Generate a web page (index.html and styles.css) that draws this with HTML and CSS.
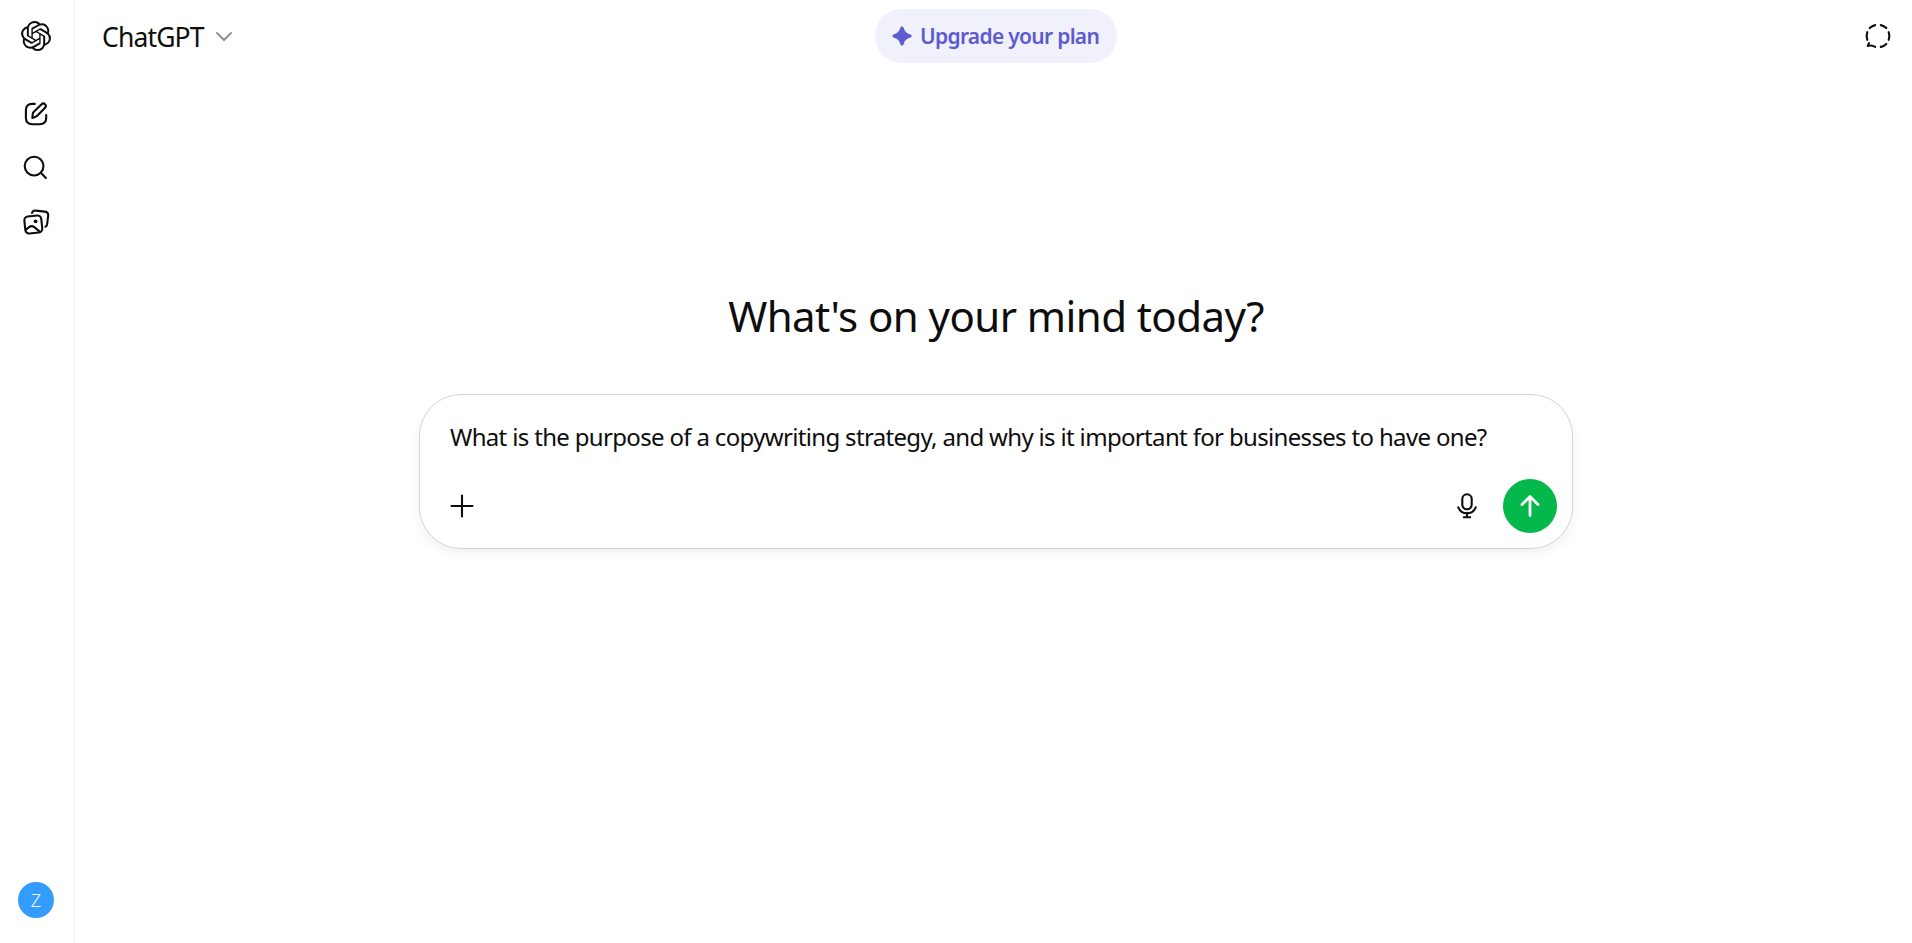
FILE: index.html
```html
<!DOCTYPE html>
<html lang="en">
<head>
    <meta charset="UTF-8">
    <title>ChatGPT</title>
    <link rel="stylesheet" href="styles.css">
</head>
<body>

<aside class="rail">
    <a class="logo" href="#">
        <svg width="30" height="30" viewBox="0 0 24 24" fill="currentColor"><path d="M22.2819 9.8211a5.9847 5.9847 0 0 0-.5157-4.9108 6.0462 6.0462 0 0 0-6.5098-2.9A6.0651 6.0651 0 0 0 4.9807 4.1818a5.9847 5.9847 0 0 0-3.9977 2.9 6.0462 6.0462 0 0 0 .7427 7.0966 5.98 5.98 0 0 0 .511 4.9107 6.051 6.051 0 0 0 6.5146 2.9001A5.9847 5.9847 0 0 0 13.2599 24a6.0557 6.0557 0 0 0 5.7718-4.2058 5.9894 5.9894 0 0 0 3.9977-2.9001 6.0557 6.0557 0 0 0-.7475-7.0729zm-9.022 12.6081a4.4755 4.4755 0 0 1-2.8764-1.0408l.1419-.0804 4.7783-2.7582a.7948.7948 0 0 0 .3927-.6813v-6.7369l2.02 1.1686a.071.071 0 0 1 .038.052v5.5826a4.504 4.504 0 0 1-4.4945 4.4944zm-9.6607-4.1254a4.4708 4.4708 0 0 1-.5346-3.0137l.142.0852 4.783 2.7582a.7712.7712 0 0 0 .7806 0l5.8428-3.3685v2.3324a.0804.0804 0 0 1-.0332.0615L9.74 19.9502a4.4992 4.4992 0 0 1-6.1408-1.6464zM2.3408 7.8956a4.485 4.485 0 0 1 2.3655-1.9728V11.6a.7664.7664 0 0 0 .3879.6765l5.8144 3.3543-2.0201 1.1685a.0757.0757 0 0 1-.071 0l-4.8303-2.7865A4.504 4.504 0 0 1 2.3408 7.872zm16.5963 3.8558L13.1038 8.364 15.1192 7.2a.0757.0757 0 0 1 .071 0l4.8303 2.7913a4.4944 4.4944 0 0 1-.6765 8.1042v-5.6772a.79.79 0 0 0-.407-.667zm2.0107-3.0231l-.142-.0852-4.7735-2.7818a.7759.7759 0 0 0-.7854 0L9.409 9.2297V6.8974a.0662.0662 0 0 1 .0284-.0615l4.8303-2.7866a4.4992 4.4992 0 0 1 6.6802 4.66zM8.3065 12.863l-2.02-1.1638a.0804.0804 0 0 1-.038-.0567V6.0742a4.4992 4.4992 0 0 1 7.3757-3.4537l-.142.0805L8.704 5.459a.7948.7948 0 0 0-.3927.6813zm1.0976-2.3654l2.602-1.4998 2.6069 1.4998v2.9994l-2.5974 1.4997-2.6067-1.4997Z"/></svg>
    </a>
    <nav class="rail-nav">
        <a class="rail-item" href="#">
            <svg class="icon" viewBox="0 0 30 30"><path d="M13.8 4.9H11.2Q4.9 4.9 4.9 11.2V19Q4.9 25.2 11.2 25.2H18.8Q25.2 25.2 25.2 19V16"/><path d="M11.3 18.9l.5-4.2q.1-.9.8-1.6l8-7.8a2.4 2.4 0 0 1 3.5 3.4l-7.9 8.1q-.7.7-1.600.9z"/></svg>
        </a>
        <a class="rail-item" href="#">
            <svg class="icon" viewBox="0 0 30 30"><circle cx="13.1" cy="13.1" r="9.4"/><path d="M19.8 19.8l5.1 5.200"/></svg>
        </a>
        <a class="rail-item" href="#">
            <svg class="icon" viewBox="0 0 30 30"><rect x="3.8" y="9" width="17" height="17" rx="3.8" transform="rotate(-6 12.3 17.5)"/><path d="M4.8 22.6l3.300-2.500q2.600-2 5.200 0l5.400 4.500"/><circle class="dot" cx="14.6" cy="14.3" r="1.900"/><path d="M11 6q.9-2.700 3.800-2.400l9 1q3.800.5 3.400 4.100l-1.100 8.700q-.2 1.700-1.700 2.300"/></svg>
        </a>
    </nav>
    <div class="avatar">Z</div>
</aside>

<main class="main">
    <header class="header">
        <button class="model">
            <span class="model-name">ChatGPT</span>
            <svg class="chevron" width="18" height="12" viewBox="0 0 18 12"><path d="M2 2l7 7 7-7"/></svg>
        </button>
        <button class="upgrade">
            <svg width="20" height="20" viewBox="0 0 20 20" fill="currentColor"><path d="M10 .4c.8 0 1.2.5 1.5 1.2 1.3 4 2.9 5.6 6.9 6.9.7.3 1.2.7 1.2 1.5s-.5 1.2-1.2 1.5c-4 1.3-5.6 2.9-6.9 6.9-.3.7-.7 1.2-1.5 1.2s-1.2-.5-1.5-1.2c-1.3-4-2.9-5.6-6.9-6.9C.9 11.2.4 10.8.4 10s.5-1.2 1.2-1.5c4-1.3 5.6-2.9 6.9-6.9C8.8.9 9.2.4 10 .4z"/></svg>
            <span class="upgrade-text">Upgrade your plan</span>
        </button>
        <button class="temp-chat">
            <svg class="icon" viewBox="0 0 30 30"><path d="M6.7 7.1A11.3 11.3 0 0 1 12.2 4.1M17.8 4.1A11.3 11.3 0 0 1 23.3 7.1M25.7 11.2A11.3 11.3 0 0 1 25.7 18.8M23.3 22.9A11.3 11.3 0 0 1 17.8 25.9M4.3 18.8A11.3 11.3 0 0 1 4.3 11.2M5.9 22L4.8 25Q8.6 23.7 12.2 25.9"/></svg>
        </button>
    </header>

    <section class="center">
        <h1 class="greeting"><span class="greeting-text">What's on your mind today?</span></h1>
        <div class="composer">
            <div class="prompt"><span class="prompt-text">What is the purpose of a copywriting strategy, and why is it important for businesses to have one?</span></div>
            <div class="tools">
                <button class="tool">
                    <svg class="icon" viewBox="0 0 30 30"><path d="M15 4.5v21M4.5 15h21"/></svg>
                </button>
                <button class="tool mic">
                    <svg class="icon" viewBox="0 0 30 30"><rect x="10.3" y="3.3" width="9.4" height="15" rx="4.7"/><path d="M6.3 16.3a9.3 9.3 0 0 0 17.4 0M15 21.8v4.4M11.8 26.3h6.4"/></svg>
                </button>
                <button class="send">
                    <svg width="30" height="30" viewBox="0 0 30 30"><path d="M15 24.5V6M7 13.5l8-8 8 8"/></svg>
                </button>
            </div>
        </div>
    </section>
</main>

</body>
</html>
```
FILE: styles.css
```css
* {
    box-sizing: border-box;
}
body {
    margin: 0;
    height: 100vh;
    display: flex;
    font-family: "Noto Sans", sans-serif;
    color: #0d0d0d;
    background: #fff;
    overflow: hidden;
}
button {
    padding: 0;
    border: none;
    background: none;
    color: inherit;
    font: inherit;
    cursor: pointer;
}
a {
    color: inherit;
}
svg {
    display: block;
}
.icon {
    width: 30px;
    height: 30px;
    fill: none;
    stroke: currentColor;
    stroke-width: 2.1;
    stroke-linecap: round;
    stroke-linejoin: round;
}
.icon .dot {
    fill: currentColor;
    stroke: none;
}

/* left rail */
.rail {
    width: 75px;
    padding-bottom: 25px;
    border-right: 1px solid #f0f0f0;
    display: flex;
    flex-direction: column;
}
.logo {
    width: 72px;
    height: 72px;
    display: grid;
    place-items: center;
}
.rail-nav {
    width: 72px;
    padding-top: 15px;
}
.rail-item {
    height: 54px;
    display: grid;
    place-items: center;
}
.avatar {
    width: 36px;
    height: 36px;
    margin: auto 0 0 18px;
    border-radius: 50%;
    background: #339cff;
    color: #fff;
    font-size: 18px;
    font-weight: 300;
    line-height: 36px;
    text-align: center;
}

/* top bar */
.main {
    flex: 1;
    display: flex;
    flex-direction: column;
}
.header {
    height: 72px;
    padding: 0 19px 0 24px;
    display: grid;
    grid-template-columns: 1fr auto 1fr;
    align-items: center;
}
.model {
    padding: 2px 0 0 3px;
    display: flex;
    align-items: center;
    gap: 11px;
    font-size: 26.5px;
    line-height: 42px;
}
.model-name {
    letter-spacing: -0.85px;
}
.chevron {
    fill: none;
    stroke: #8f8f8f;
    stroke-width: 2;
    stroke-linecap: round;
    stroke-linejoin: round;
}
.upgrade {
    width: 242px;
    height: 54px;
    padding-left: 17px;
    border-radius: 27px;
    background: #f1f1fb;
    color: #5d5bd0;
    display: flex;
    align-items: center;
    gap: 8px;
    font-size: 21px;
    font-weight: 600;
    white-space: nowrap;
}
.upgrade-text {
    letter-spacing: -0.7px;
}
.temp-chat {
    justify-self: end;
}

/* prompt area */
.center {
    padding: 211px 0 0 5px;
    display: flex;
    flex-direction: column;
    align-items: center;
}
.greeting {
    margin: 0 0 46px;
    font-size: 42px;
    font-weight: 400;
    line-height: 65px;
    white-space: nowrap;
}
.greeting-text {
    letter-spacing: -0.57px;
}
.composer {
    width: 1154px;
    height: 155px;
    padding: 15px 15px 15px 27px;
    border: 1px solid #d4d4d4;
    border-radius: 42px;
    background: #fff;
    box-shadow: 0 6px 12px rgba(0, 0, 0, 0.05);
    display: flex;
    flex-direction: column;
    justify-content: space-between;
}
.prompt {
    padding: 8px 0 0 3px;
    font-size: 24px;
    line-height: 38px;
    white-space: nowrap;
}
.prompt-text {
    letter-spacing: -0.665px;
}
.tools {
    display: flex;
    align-items: center;
}
.mic {
    margin: 0 21px 0 auto;
}
.send {
    width: 54px;
    height: 54px;
    border-radius: 50%;
    background: #04b84c;
    display: grid;
    place-items: center;
}
.send path {
    fill: none;
    stroke: #fff;
    stroke-width: 2.8;
    stroke-linecap: round;
    stroke-linejoin: round;
}
```
